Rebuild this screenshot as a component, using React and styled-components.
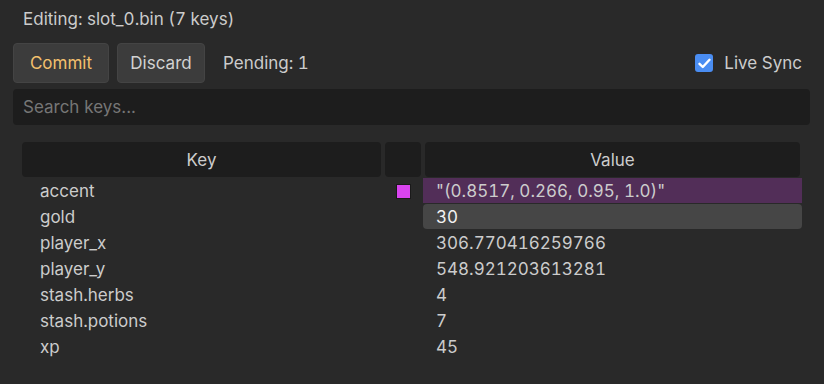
import React, { useState } from "react";
import styled, { createGlobalStyle } from "styled-components";

const GlobalStyle = createGlobalStyle`
    html, body {
        margin: 0;
        background: #292929;
        font-family: Inter, "Noto Sans", sans-serif;
        font-variant-numeric: tabular-nums;
        color: #cccccc;
    }
`;

const Page = styled.div`
    width: 824px;
    height: 384px;
    box-sizing: border-box;
    padding: 8px 14px 0 13px;
    display: flex;
    flex-direction: column;
    font-size: 17px;
`;

const Title = styled.div`
    line-height: 22px;
    padding-left: 10px;
    height: 35px;
`;

const Toolbar = styled.div`
    display: flex;
    align-items: center;
    gap: 8px;
    height: 40px;
`;

const Button = styled.button`
    height: 40px;
    width: ${(p) => p.$width}px;
    padding: 0;
    border: 1px solid #444;
    border-radius: 4px;
    background: #3c3c3c;
    color: ${(p) => (p.$accent ? "#f3c06d" : "#d2d2d2")};
    font-family: inherit;
    font-variant-numeric: inherit;
    font-size: 17px;
`;

const Pending = styled.span`
    margin-left: 10px;
    flex-grow: 1;
`;

const SyncLabel = styled.label`
    display: flex;
    align-items: center;
    gap: 11px;
    margin-right: 8px;
`;

const Check = styled.span`
    width: 18px;
    height: 18px;
    border-radius: 3px;
    background: ${(p) => (p.$on ? "#4a8df2" : "#3c3c3c")};
    display: flex;
    align-items: center;
    justify-content: center;
`;

const Search = styled.input`
    margin-top: 6px;
    height: 36px;
    box-sizing: border-box;
    border: none;
    border-radius: 4px;
    background: #1d1d1d;
    padding: 0 10px;
    font-family: inherit;
    font-size: 17px;
    color: #cccccc;
    outline: none;
    &::placeholder {
        color: #767676;
    }
`;

const Table = styled.div`
    margin-top: 17px;
    margin-left: 9px;
    width: 780px;
    display: grid;
    grid-template-columns: 359px 36px 375px;
    column-gap: 4px;
`;

const HeadCell = styled.div`
    height: 35px;
    border-radius: 4px;
    background: #1d1d1d;
    display: flex;
    align-items: center;
    justify-content: center;
    margin-bottom: 1px;
`;

const KeyCell = styled.div`
    height: 26px;
    display: flex;
    align-items: center;
    padding-left: 18px;
`;

const SwatchCell = styled.div`
    height: 26px;
    display: flex;
    align-items: center;
    padding-left: 11px;
`;

const Swatch = styled.span`
    width: 13px;
    height: 13px;
    background: ${(p) => p.$color};
    border: 1px solid #1a1a1a;
`;

const ValueCell = styled.div`
    height: 25px;
    margin: 0 -2px 1px -2px;
    display: flex;
    align-items: center;
    padding-left: 13px;
    border-radius: ${(p) => (p.$selected ? "4px" : "0")};
    background: ${(p) => (p.$tint ? "#522e58" : p.$selected ? "#464646" : "transparent")};
    color: ${(p) => (p.$selected ? "#f2f2f2" : "#cccccc")};
`;

const rows = [
    { key: "accent", value: "\"(0.8517, 0.266, 0.95, 1.0)\"", color: "#d944ef" },
    { key: "gold", value: "30" },
    { key: "player_x", value: "306.770416259766" },
    { key: "player_y", value: "548.921203613281" },
    { key: "stash.herbs", value: "4" },
    { key: "stash.potions", value: "7" },
    { key: "xp", value: "45" },
];

export default function App() {
    const [liveSync, setLiveSync] = useState(true);
    const [query, setQuery] = useState("");
    const filtered = rows.filter((r) => r.key.includes(query));
    return (
        <>
            <GlobalStyle />
            <Page>
                <Title>Editing: slot_0.bin (7 keys)</Title>
                <Toolbar>
                    <Button $accent $width={96}>Commit</Button>
                    <Button $width={88}>Discard</Button>
                    <Pending>Pending: 1</Pending>
                    <SyncLabel onClick={() => setLiveSync(!liveSync)}>
                        <Check $on={liveSync}>
                            {liveSync && (
                                <svg width="13" height="11" viewBox="0 0 13 11">
                                    <path d="M1.5 5.8 L4.8 9 L11.5 1.8" fill="none" stroke="#fff" strokeWidth="2.4" strokeLinecap="round" strokeLinejoin="round" />
                                </svg>
                            )}
                        </Check>
                        Live Sync
                    </SyncLabel>
                </Toolbar>
                <Search placeholder="Search keys..." value={query} onChange={(e) => setQuery(e.target.value)} />
                <Table>
                    <HeadCell>Key</HeadCell>
                    <HeadCell />
                    <HeadCell>Value</HeadCell>
                    {filtered.map((r, i) => (
                        <React.Fragment key={r.key}>
                            <KeyCell>{r.key}</KeyCell>
                            <SwatchCell>{r.color && <Swatch $color={r.color} />}</SwatchCell>
                            <ValueCell $tint={!!r.color} $selected={i === 1}>{r.value}</ValueCell>
                        </React.Fragment>
                    ))}
                </Table>
            </Page>
        </>
    );
}
